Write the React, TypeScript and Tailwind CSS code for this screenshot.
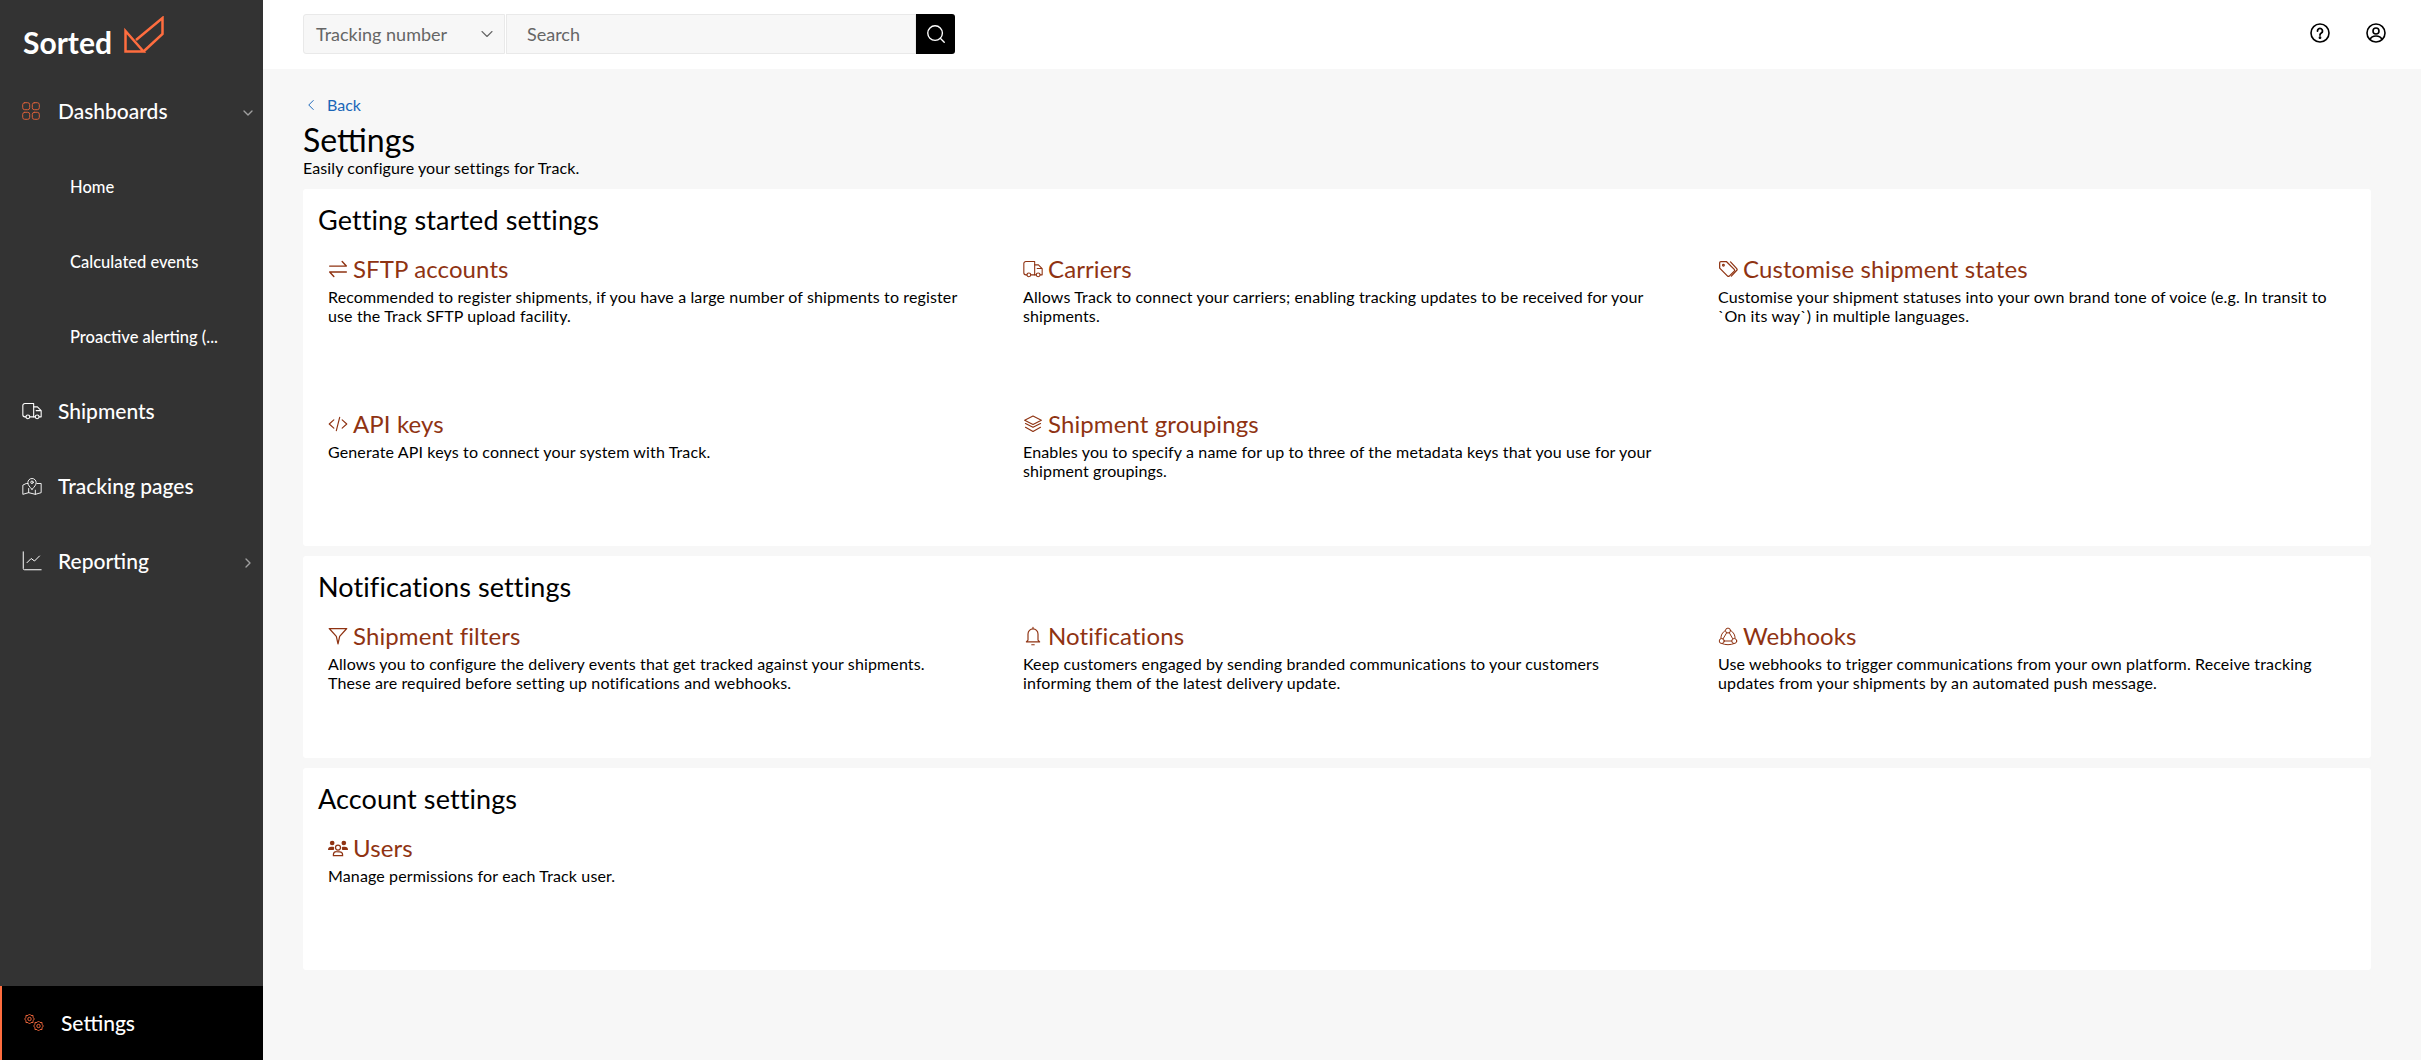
import type { ReactNode } from 'react';
import { ChevronDown, ChevronLeft, ChevronRight, Search } from 'lucide-react';

const font = "font-['Lato',sans-serif]";

interface SettingItem {
    title: string;
    icon: ReactNode;
    lines: string[];
}

const Ico = ({ children, className = 'w-5 h-5', box = '0 0 24 24', sw = 1.3 }: { children: ReactNode; className?: string; box?: string; sw?: number }) => (
    <svg className={`shrink-0 ${className}`} viewBox={box} fill="none" stroke="currentColor" strokeWidth={sw} strokeLinecap="round" strokeLinejoin="round">
        {children}
    </svg>
);

const TruckIcon = ({ className }: { className?: string }) => (
    <Ico className={className}>
        <path d="M4.800 19H3.500A2.500 2.500 0 0 1 1 16.500V5.500A2.500 2.500 0 0 1 3.500 3H14v16H9.500" />
        <path d="M14 7h4.500L23 11.500V19h-2.500M16 19h-2M17 11.500h6" />
        <circle cx="7" cy="19" r="2.300" />
        <circle cx="18.200" cy="19" r="2.300" />
    </Ico>
);

// small gear outline used by the settings item
const gearPath = (cx: number, cy: number, r: number) => {
    const pts: string[] = [];
    for (let i = 0; i < 16; i++) {
        const a = (i * Math.PI) / 8;
        const rad = i % 2 === 0 ? r : r * 0.76;
        pts.push(`${(cx + rad * Math.cos(a)).toFixed(2)} ${(cy + rad * Math.sin(a)).toFixed(2)}`);
    }
    return `M${pts.join('L')}Z`;
};

const gettingStarted: SettingItem[] = [
    {
        title: 'SFTP accounts',
        icon: (
            <Ico sw={1.7}>
                <path d="M2 8.500h20M17 3l5 5.500M22 15.500H2M7 21l-5-5.500" />
            </Ico>
        ),
        lines: ['Recommended to register shipments, if you have a large number of shipments to register', 'use the Track SFTP upload facility.'],
    },
    {
        title: 'Carriers',
        icon: <TruckIcon className="w-5 h-5" />,
        lines: ['Allows Track to connect your carriers; enabling tracking updates to be received for your', 'shipments.'],
    },
    {
        title: 'Customise shipment states',
        icon: (
            <Ico sw={1.5}>
                <path d="M2 4.500V11l9.500 9.500a1.500 1.500 0 0 0 2 0l6-6a1.500 1.500 0 0 0 0-2L10 3H3.500A1.500 1.500 0 0 0 2 4.500z" />
                <path d="M15 3.500l7.500 8a1.500 1.500 0 0 1 0 2L16 20.500" />
                <circle cx="6.500" cy="7.500" r="1" />
            </Ico>
        ),
        lines: ['Customise your shipment statuses into your own brand tone of voice (e.g. In transit to', '`On its way`) in multiple languages.'],
    },
    {
        title: 'API keys',
        icon: (
            <Ico sw={1.4}>
                <path d="M7 7l-5.500 5L7 17M17 7l5.500 5L17 17M14 4l-4 16" />
            </Ico>
        ),
        lines: ['Generate API keys to connect your system with Track.'],
    },
    {
        title: 'Shipment groupings',
        icon: (
            <Ico sw={1.4}>
                <path d="M12 2.500L22 7.500l-10 5-10-5 10-5z" />
                <path d="M3 11.500l9 4.500 9-4.500M3 16l9 5 9-5" />
            </Ico>
        ),
        lines: ['Enables you to specify a name for up to three of the metadata keys that you use for your', 'shipment groupings.'],
    },
];

const notifications: SettingItem[] = [
    {
        title: 'Shipment filters',
        icon: (
            <Ico sw={1.5}>
                <path d="M1.500 3h21l-8.500 9.500-2 9-2-9L1.500 3z" />
            </Ico>
        ),
        lines: ['Allows you to configure the delivery events that get tracked against your shipments.', 'These are required before setting up notifications and webhooks.'],
    },
    {
        title: 'Notifications',
        icon: (
            <Ico sw={1.4}>
                <path d="M6 17V9.500a6 6 0 0 1 12 0V17l2 2H4l2-2zM12 3.500V1.500M10.500 22.500h3" />
            </Ico>
        ),
        lines: ['Keep customers engaged by sending branded communications to your customers', 'informing them of the latest delivery update.'],
    },
    {
        title: 'Webhooks',
        icon: (
            <Ico sw={1.2}>
                <circle cx="12" cy="5.500" r="3" />
                <circle cx="4.500" cy="18" r="3" />
                <circle cx="19.500" cy="18" r="3" />
                <path d="M10.500 8L6 15.500M7.500 18h9M13.500 8l4 7M8.500 5.500C5 8 3.500 11 3.500 14.500M4.500 21c5 2 10 2 15 0M15.500 5.500c3.500 2.500 5 5.500 5 9" />
            </Ico>
        ),
        lines: ['Use webhooks to trigger communications from your own platform. Receive tracking', 'updates from your shipments by an automated push message.'],
    },
];

const account: SettingItem[] = [
    {
        title: 'Users',
        icon: (
            <svg className="shrink-0 w-5 h-5" viewBox="0 0 24 24" fill="currentColor">
                <circle cx="5" cy="6" r="2.800" />
                <circle cx="19" cy="6" r="2.800" />
                <path d="M0 14.500a4 4 0 0 1 4-4h2.500a4 4 0 0 1 1 1.500 5 5 0 0 0-.5 2.500H0zM24 14.500a4 4 0 0 0-4-4h-2.500a4 4 0 0 0-1 1.500 5 5 0 0 1 .5 2.500H24z" />
                <circle cx="12" cy="11.500" r="3" fill="none" stroke="currentColor" strokeWidth="1.500" />
                <path d="M6.500 21v-1.500A3.500 3.500 0 0 1 10 16.500h4a3.500 3.500 0 0 1 3.500 3.500v1h-11z" fill="none" stroke="currentColor" strokeWidth="1.500" />
            </svg>
        ),
        lines: ['Manage permissions for each Track user.'],
    },
];

function Card({ title, items }: { title: string; items: SettingItem[] }) {
    return (
        <section className="bg-white rounded-[3px]">
            <h2 className="h-[63px] pl-[15px] pt-[14px] text-[27px] leading-[34px] font-normal text-black tracking-[0.1px]">{title}</h2>
            <div className="grid grid-cols-[665px_665px_665px] gap-x-[30px] gap-y-[16px] pl-[25px]">
                {items.map((item) => (
                    <div key={item.title} className="h-[139px]">
                        <div className="flex items-center gap-[5px] h-[36px] -mt-[1px] text-[#8f3312]">
                            {item.icon}
                            <span className="text-[24px] leading-[30px] tracking-[0.1px]">{item.title}</span>
                        </div>
                        <p className="text-[16px] leading-[19px] tracking-[0.13px] text-black">
                            {item.lines.map((line) => (
                                <span key={line} className="block whitespace-nowrap">
                                    {line}
                                </span>
                            ))}
                        </p>
                    </div>
                ))}
            </div>
        </section>
    );
}

function NavItem({ icon, label, chevron }: { icon: ReactNode; label: string; chevron?: 'down' | 'right' }) {
    return (
        <div className="flex items-center h-[75px] pl-[22px] pr-[7px] pb-[3px] text-white">
            <span className="w-[36px]">{icon}</span>
            <span className="text-[21px] font-medium">{label}</span>
            {chevron === 'down' && <ChevronDown className="ml-auto mt-[3px] w-4 h-4 text-[#a0a0a0]" />}
            {chevron === 'right' && <ChevronRight className="ml-auto mt-[3px] w-4 h-4 text-[#a0a0a0]" />}
        </div>
    );
}

function SubItem({ label }: { label: string }) {
    return <div className="flex items-center h-[75px] pl-[70px] text-[16.500px] font-medium text-white">{label}</div>;
}

export default function App() {
    return (
        <div className={`flex h-screen overflow-hidden bg-[#f7f7f7] ${font}`}>
            {/* Sidebar */}
            <aside className="flex flex-col w-[263px] shrink-0 bg-[#333333]">
                <div className="flex items-center h-[75px] pl-[23px]">
                    <span className="text-[30px] font-bold text-white leading-none mt-[9px] w-[88px]">Sorted</span>
                    <svg className="ml-[13px] -mt-[7px] w-[40px] h-[37px]" viewBox="0 0 40 37" fill="none" stroke="#ff6d3f" strokeWidth="2.500" strokeLinejoin="miter">
                        <path d="M1.500 15V35.500H19.500L1.500 15z" />
                        <path d="M12 24L38.500 2V18L19.500 35.500" />
                    </svg>
                </div>
                <NavItem
                    label="Dashboards"
                    chevron="down"
                    icon={
                        <Ico className="w-[18px] h-[18px] text-[#d9603a]" box="0 0 18 18" sw={1}>
                            <rect x="0.700" y="0.700" width="7" height="7" rx="2" />
                            <rect x="10.300" y="0.700" width="7" height="7" rx="2" />
                            <rect x="0.700" y="10.300" width="7" height="7" rx="2" />
                            <rect x="10.300" y="10.300" width="7" height="7" rx="2" />
                        </Ico>
                    }
                />
                <SubItem label="Home" />
                <SubItem label="Calculated events" />
                <SubItem label="Proactive alerting (..." />
                <NavItem label="Shipments" icon={<TruckIcon className="w-5 h-5 text-white" />} />
                <NavItem
                    label="Tracking pages"
                    icon={
                        <Ico className="w-5 h-5 text-white" sw={1.1}>
                            <path d="M7 9H5L1 11v11l7-2 8 2 7-2V9h-5M8 15v5M16 17v5" />
                            <path d="M12 16c-3-3-5-5.500-5-8a5 5 0 0 1 10 0c0 2.500-2 5-5 8z" />
                            <circle cx="12" cy="7.500" r="1.500" />
                        </Ico>
                    }
                />
                <NavItem
                    label="Reporting"
                    chevron="right"
                    icon={
                        <Ico className="w-5 h-5 text-white" sw={1.2}>
                            <path d="M1.500 1v20a1.500 1.500 0 0 0 1.500 1.500h20M6 14l5-5 4 3 6-6" />
                        </Ico>
                    }
                />
                <div className="mt-auto flex items-center h-[74px] bg-black border-l-2 border-[#ff6d3f] pl-[22px] pb-[1px] text-white">
                    <span className="w-[37px]">
                        <svg className="w-5 h-5 text-[#ff6d3f]" viewBox="0 0 20 20" fill="none" stroke="currentColor" strokeWidth="0.900" strokeLinejoin="round">
                            <path d={gearPath(5.5, 6, 5)} />
                            <circle cx="5.500" cy="6" r="1.700" />
                            <path d={gearPath(14.5, 13, 5)} />
                            <circle cx="14.500" cy="13" r="1.700" />
                        </svg>
                    </span>
                    <span className="text-[21px] font-medium">Settings</span>
                </div>
            </aside>

            <div className="flex-1 min-w-0 flex flex-col">
                {/* Top bar */}
                <header className="flex items-center h-[69px] shrink-0 bg-white pl-[40px] pr-[35px] pb-[1px]">
                    <div className="flex items-center justify-between w-[202px] h-[40px] bg-[#f7f7f7] border border-[#e9e9e9] rounded-l-[3px] pl-[12px] pr-[7px] text-[18px] text-[#666666]">
                        <span>Tracking number</span>
                        <ChevronDown className="w-5 h-5" strokeWidth={1.300} />
                    </div>
                    <div className="flex items-center w-[410px] h-[40px] ml-px bg-[#f7f7f7] border border-[#e9e9e9] pl-[20px] text-[18px] text-[#666666]">Search</div>
                    <div className="flex items-center justify-center w-[39px] h-[40px] bg-black rounded-r-[3px]">
                        <Search className="w-[22px] h-[22px] text-white" strokeWidth={1.500} />
                    </div>
                    <div className="ml-auto flex items-center gap-[36px] text-black -mt-[3px]">
                        <svg className="w-5 h-5" viewBox="0 0 20 20" fill="none" stroke="currentColor" strokeWidth="1.600" strokeLinecap="round">
                            <circle cx="10" cy="10" r="9" />
                            <path d="M7.500 8a2.500 2.500 0 1 1 3.800 2.100c-.9.600-1.300 1-1.300 2" strokeWidth="1.800" />
                            <circle cx="10" cy="14.700" r="0.600" fill="currentColor" />
                        </svg>
                        <svg className="w-5 h-5" viewBox="0 0 20 20" fill="none" stroke="currentColor" strokeWidth="1.600">
                            <circle cx="10" cy="10" r="9" />
                            <circle cx="10" cy="8" r="3" />
                            <path d="M4 16.500c1-2.500 3-3.500 6-3.500s5 1 6 3.500" />
                        </svg>
                    </div>
                </header>

                {/* Content */}
                <main className="flex-1 pl-[40px] pr-[50px] text-black">
                    <div className="flex items-center h-[20px] mt-[26px] text-[16px] text-[#1a66b8]">
                        <ChevronLeft className="w-[18px] h-[18px] -ml-[1px]" strokeWidth={1.300} />
                        <span className="ml-[7px]">Back</span>
                    </div>
                    <h1 className="mt-[5px] text-[32px] leading-[40px] font-normal">Settings</h1>
                    <p className="text-[16px] leading-[20px] tracking-[0.1px] -mt-[2px]">Easily configure your settings for Track.</p>
                    <div className="flex flex-col gap-[10px] mt-[11px]">
                        <Card title="Getting started settings" items={gettingStarted} />
                        <Card title="Notifications settings" items={notifications} />
                        <Card title="Account settings" items={account} />
                    </div>
                </main>
            </div>
        </div>
    );
}
